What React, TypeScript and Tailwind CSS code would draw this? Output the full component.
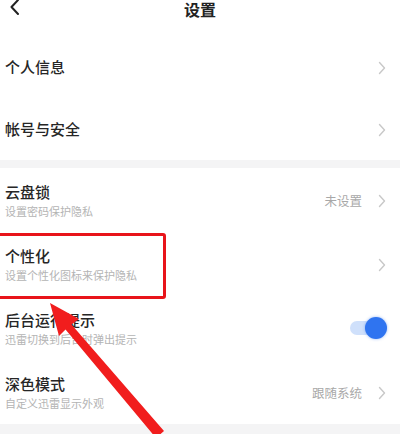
import React from "react";

const font = { fontFamily: '"Noto Sans CJK SC", "Noto Sans", sans-serif' };

function Chevron() {
  return (
    <svg width="8" height="14" viewBox="0 0 8 14" className="shrink-0">
      <path d="M1.5 1.5 L6.5 7 L1.5 12.5" fill="none" stroke="#c8c8c8" strokeWidth="1.4" strokeLinecap="round" strokeLinejoin="round" />
    </svg>
  );
}

function Row({
  title,
  sub,
  value,
  right,
  h = "h-[64px]",
}: {
  title: string;
  sub?: string;
  value?: string;
  right?: React.ReactNode;
  h?: string;
}) {
  return (
    <div className={`flex items-center justify-between pl-[5px] pr-[14px] ${h}`}>
      <div className="flex flex-col gap-[2px]">
        <div className="text-[15px] leading-[20px] font-medium text-[#262626]">{title}</div>
        {sub && <div className="text-[11px] leading-[14px] text-[#b4b4b4]">{sub}</div>}
      </div>
      {right ?? (
        <div className="flex items-center gap-[16px] mt-[2px]">
          {value && <span className="text-[12.5px] text-[#a8a8a8]">{value}</span>}
          <Chevron />
        </div>
      )}
    </div>
  );
}

function Toggle() {
  return (
    <div className="relative w-[36px] h-[24px] flex items-center">
      <div className="w-[34px] h-[14px] rounded-full bg-[#cfe0fb]" />
      <div className="absolute right-[-1px] top-[1px] w-[22px] h-[22px] rounded-full bg-[#2f74f0] shadow-[0_0_3px_rgba(47,116,240,0.5)]" />
    </div>
  );
}

export default function App() {
  return (
    <div className="relative w-[400px] h-[434px] overflow-hidden bg-white" style={font}>
      <div className="relative h-[18px] flex items-center justify-center">
        <svg width="12" height="18" viewBox="0 0 12 18" className="absolute left-[9px] top-[-2px]">
          <path d="M9 2 L2.5 9 L9 16" fill="none" stroke="#222" strokeWidth="2" strokeLinecap="round" strokeLinejoin="round" />
        </svg>
        <div className="text-[16px] leading-[18px] font-bold text-[#222]">设置</div>
      </div>
      <div className="h-[18px]" />
      <Row title="个人信息" h="h-[62px]" />
      <Row title="帐号与安全" h="h-[62px]" />
      <div className="h-[8px] bg-[#f4f4f5]" />
      <Row title="云盘锁" sub="设置密码保护隐私" value="未设置" />
      <Row title="个性化" sub="设置个性化图标来保护隐私" />
      <Row title="后台运行提示" sub="迅雷切换到后台时弹出提示" right={<Toggle />} />
      <Row title="深色模式" sub="自定义迅雷显示外观" value="跟随系统" />
      <div className="h-[20px] bg-[#f4f4f5]" />

      <div className="absolute left-[-4px] top-[233px] w-[170px] h-[66px] border-[3px] border-[#e8141a] rounded-[3px]" />
      <svg width="400" height="434" viewBox="0 0 400 434" className="absolute left-0 top-0 pointer-events-none">
        <polygon
          points="50,303 79,319 71.5,324.5 164,431 156,438 65.5,329.5 59,336"
          fill="#f11d1d"
        />
      </svg>
    </div>
  );
}
